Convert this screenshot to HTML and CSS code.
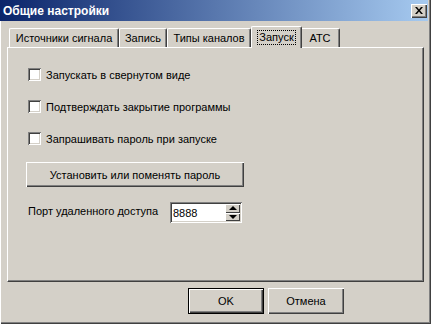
FILE: index.html
```html
<!DOCTYPE html>
<html lang="ru">
<head>
    <meta charset="UTF-8">
    <title>Общие настройки</title>
    <link rel="stylesheet" href="styles.css">
</head>
<body>
    <div class="window">
        <div class="titlebar">
            <span class="title">Общие настройки</span>
            <button class="close-btn" type="button">
                <svg width="8" height="7" viewBox="0 0 8 7">
                    <path d="M0 0h2l2 2.5L6 0h2L5 3.5 8 7H6L4 4.5 2 7H0l3-3.5z" fill="#000"/>
                </svg>
            </button>
        </div>

        <div class="content">
            <div class="tabs">
                <div class="tab tab-sources">Источники сигнала</div>
                <div class="tab tab-record">Запись</div>
                <div class="tab tab-channels">Типы каналов</div>
                <div class="tab tab-start active"><span class="focus">Запуск</span></div>
                <div class="tab tab-ats">АТС</div>
            </div>

            <div class="panel">
                <label class="check"><span class="box"></span>Запускать в свернутом виде</label>
                <label class="check"><span class="box"></span>Подтверждать закрытие программы</label>
                <label class="check"><span class="box"></span>Запрашивать пароль при запуске</label>

                <button class="btn btn-wide" type="button">Установить или поменять пароль</button>

                <div class="port-row">
                    <span class="port-label">Порт удаленного доступа</span>
                    <div class="spin">
                        <span class="spin-value">8888</span>
                        <div class="spin-btns">
                            <span class="spin-btn"><i class="arrow-up"></i></span>
                            <span class="spin-btn"><i class="arrow-down"></i></span>
                        </div>
                    </div>
                </div>
            </div>

            <div class="actions">
                <button class="btn btn-default" type="button">OK</button>
                <button class="btn" type="button">Отмена</button>
            </div>
        </div>
    </div>
</body>
</html>
```

FILE: styles.css
```css
/* Reset */
* {
    margin: 0;
    padding: 0;
    box-sizing: border-box;
}

body {
    background-color: #d4d0c8;
    font-family: "Liberation Sans", Arial, sans-serif;
    font-size: 11px;
    color: #000;
}

/* Dialog frame */
.window {
    width: 431px;
    height: 324px;
    background-color: #d4d0c8;
    box-shadow: inset 1px 0 #fff, inset -1px -1px #404040, inset -2px -2px #808080;
}

.titlebar {
    height: 21px;
    margin-right: 3px;
    display: flex;
    align-items: center;
    justify-content: space-between;
    padding: 0 1px 0 3px;
    background: linear-gradient(to right, #0a246a, #a6caf0);
}

.title {
    color: #fff;
    font-weight: bold;
    font-size: 12px;
}

.close-btn {
    width: 16px;
    height: 14px;
    display: flex;
    align-items: center;
    justify-content: center;
    border: none;
    background-color: #d4d0c8;
    box-shadow: inset 1px 1px #fff, inset -1px -1px #404040, inset -2px -2px #808080;
}

.content {
    padding: 5px 7px 0 7px;
}

/* Tabs */
.tabs {
    display: flex;
    align-items: flex-end;
    height: 21px;
    padding-left: 2px;
}

.tab {
    height: 19px;
    display: flex;
    align-items: center;
    justify-content: center;
    border-top: 1px solid #fff;
    border-left: 1px solid #fff;
    border-right: 1px solid #404040;
    border-radius: 2px 2px 0 0;
    box-shadow: inset -1px 0 #808080;
    white-space: nowrap;
}

.tab-sources { width: 110px; }
.tab-record { width: 48px; }
.tab-channels { width: 84px; }
.tab-start { width: 51px; }
.tab-ats { width: 40px; }

.tab.active {
    height: 22px;
    margin: 0 -2px -1px -2px;
    padding-bottom: 1px;
    position: relative;
    z-index: 1;
    background-color: #d4d0c8;
}

.tab-start.active {
    margin-left: 0;
}

.focus {
    outline: 1px dotted #000;
    padding: 0 1px;
    line-height: 13px;
}

/* Page panel */
.panel {
    height: 235px;
    padding: 20px 18px 0 18px;
    border: 1px solid;
    border-color: #fff #404040 #404040 #fff;
    box-shadow: inset -1px -1px #808080;
    display: flex;
    flex-direction: column;
    align-items: flex-start;
}

.check {
    display: flex;
    align-items: center;
    gap: 5px;
    height: 13px;
    margin-left: 2px;
    margin-bottom: 19px;
}

.box {
    width: 13px;
    height: 13px;
    background-color: #fff;
    box-shadow: inset 1px 1px #808080, inset -1px -1px #fff, inset 2px 2px #404040, inset -2px -2px #d4d0c8;
}

.check:nth-of-type(3) {
    margin-bottom: 17px;
}

/* Buttons */
.btn {
    height: 26px;
    border: none;
    background-color: #d4d0c8;
    font-family: inherit;
    font-size: 11px;
    color: #000;
    box-shadow: inset 1px 1px #fff, inset -1px -1px #404040, inset -2px -2px #808080;
}

.btn-wide {
    width: 218px;
    height: 25px;
}

.port-row {
    display: flex;
    align-items: center;
    margin-top: 15px;
    margin-left: 2px;
}

.port-label {
    width: 142px;
    margin-top: -3px;
}

.spin {
    width: 72px;
    height: 21px;
    display: flex;
    align-items: center;
    justify-content: space-between;
    padding: 2px;
    background-color: #fff;
    box-shadow: inset 1px 1px #808080, inset -1px -1px #fff, inset 2px 2px #404040, inset -2px -2px #d4d0c8;
}

.spin-value {
    padding-left: 1px;
}

.spin-btns {
    display: flex;
    flex-direction: column;
    width: 15px;
    height: 17px;
}

.spin-btn {
    flex: 1;
    display: flex;
    align-items: center;
    justify-content: center;
    background-color: #d4d0c8;
    box-shadow: inset 1px 1px #fff, inset -1px -1px #404040;
}

.arrow-up {
    border-left: 4px solid transparent;
    border-right: 4px solid transparent;
    border-bottom: 4px solid #000;
}

.arrow-down {
    border-left: 4px solid transparent;
    border-right: 4px solid transparent;
    border-top: 4px solid #000;
}

/* Dialog buttons */
.actions {
    display: flex;
    gap: 4px;
    margin-top: 6px;
    padding-left: 181px;
}

.actions .btn {
    width: 76px;
}

.btn-default {
    border: 1px solid #000;
    box-shadow: inset 1px 1px #fff, inset -1px -1px #404040, inset -2px -2px #808080;
}
```
